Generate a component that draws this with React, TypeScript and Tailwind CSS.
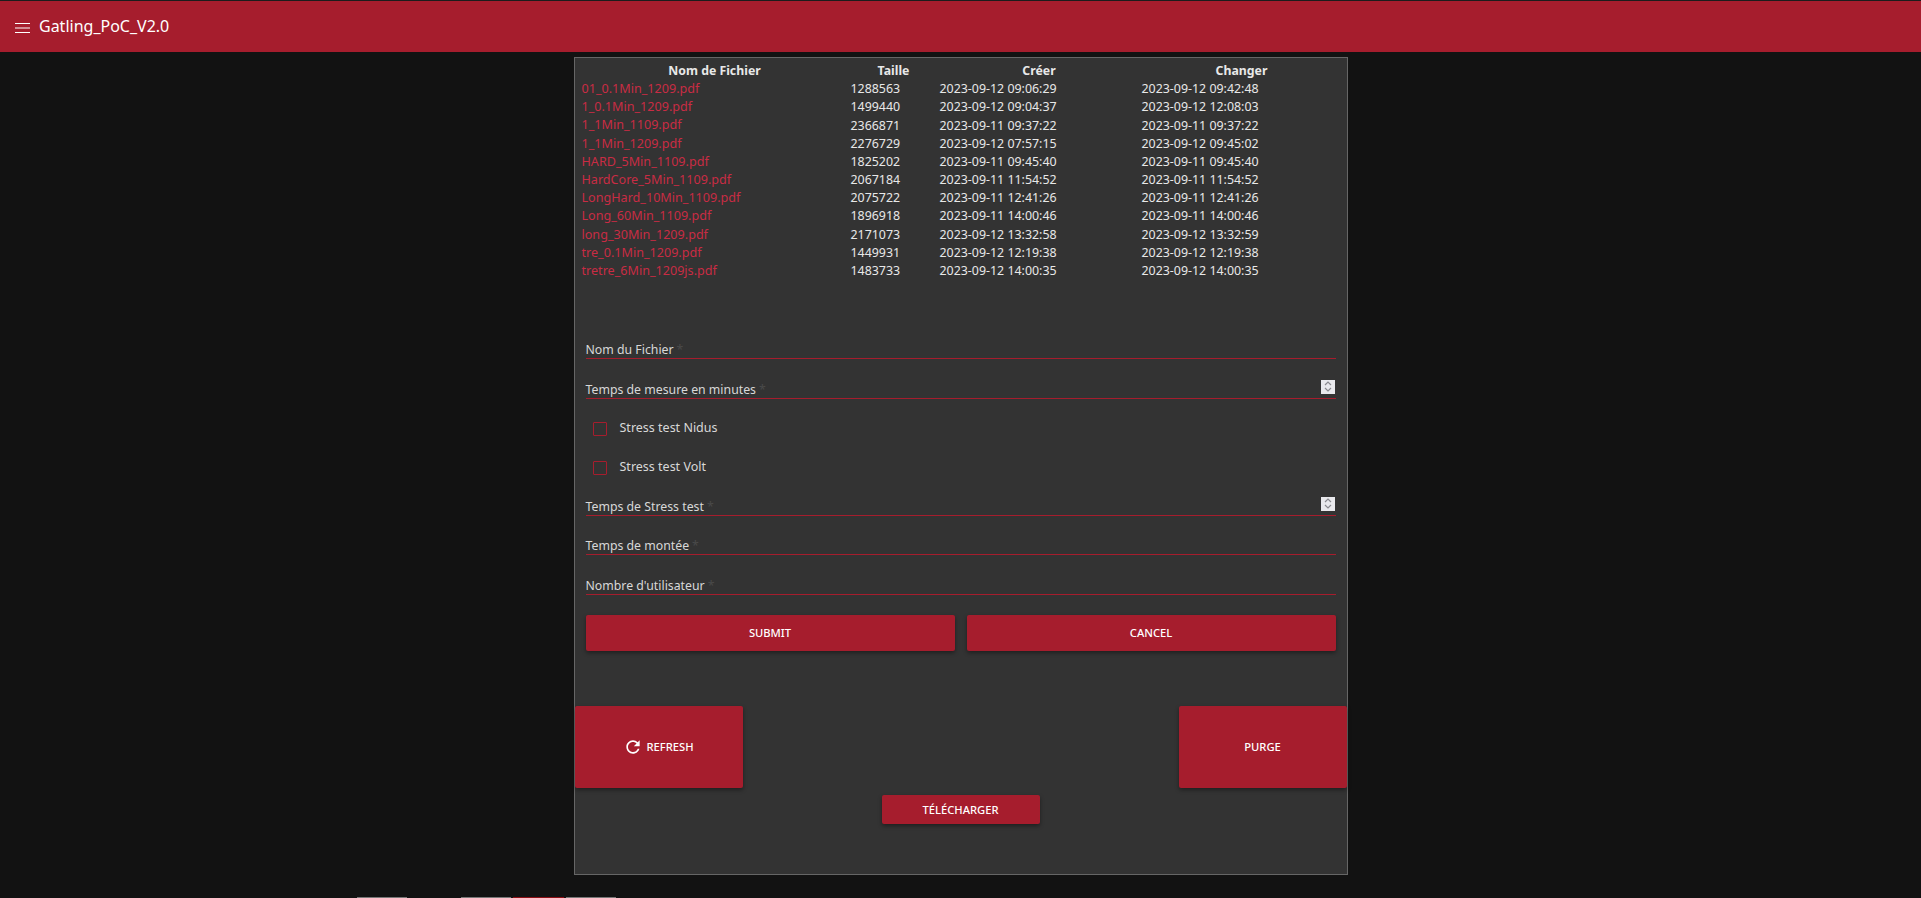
const FILES = [
  ["01_0.1Min_1209.pdf", "1288563", "2023-09-12 09:06:29", "2023-09-12 09:42:48"],
  ["1_0.1Min_1209.pdf", "1499440", "2023-09-12 09:04:37", "2023-09-12 12:08:03"],
  ["1_1Min_1109.pdf", "2366871", "2023-09-11 09:37:22", "2023-09-11 09:37:22"],
  ["1_1Min_1209.pdf", "2276729", "2023-09-12 07:57:15", "2023-09-12 09:45:02"],
  ["HARD_5Min_1109.pdf", "1825202", "2023-09-11 09:45:40", "2023-09-11 09:45:40"],
  ["HardCore_5Min_1109.pdf", "2067184", "2023-09-11 11:54:52", "2023-09-11 11:54:52"],
  ["LongHard_10Min_1109.pdf", "2075722", "2023-09-11 12:41:26", "2023-09-11 12:41:26"],
  ["Long_60Min_1109.pdf", "1896918", "2023-09-11 14:00:46", "2023-09-11 14:00:46"],
  ["long_30Min_1209.pdf", "2171073", "2023-09-12 13:32:58", "2023-09-12 13:32:59"],
  ["tre_0.1Min_1209.pdf", "1449931", "2023-09-12 12:19:38", "2023-09-12 12:19:38"],
  ["tretre_6Min_1209js.pdf", "1483733", "2023-09-12 14:00:35", "2023-09-12 14:00:35"],
];

const ROW = "grid grid-cols-[264px_84px_197px_198px] gap-x-[5px]";
const BTN =
  "flex items-center justify-center rounded-[2px] bg-[#a61d2d] pt-[2px] text-[11.2px] font-medium uppercase text-white shadow-[0_2px_4px_rgba(0,0,0,0.4)]";

function Field({ label, spinner, className }: { label: string; spinner?: boolean; className: string }) {
  return (
    <div className={`flex items-end justify-between border-b border-[#a61d2d] ${className}`}>
      <span className="text-[12.3px] leading-[17px] text-[#d8d8d8]">
        {label}
        <span className="ml-[3px] text-[#4a4a4a]">*</span>
      </span>
      {spinner && (
        <span className="mb-[4px] mr-[1px] flex h-[14px] w-[14px] items-center justify-center bg-[#e9e9ed]">
          <svg width="8" height="11" viewBox="0 0 8 11" fill="none" stroke="#8a8a90" strokeWidth="1.2">
            <path d="M1 4 L4 1 L7 4" />
            <path d="M1 7 L4 10 L7 7" />
          </svg>
        </span>
      )}
    </div>
  );
}

function Check({ label }: { label: string }) {
  return (
    <label className="flex h-[39px] items-center pl-[7px]">
      <span className="h-[14px] w-[14px] rounded-[1px] border border-[#a61d2d]" />
      <span className="mb-[2px] ml-[13px] text-[12.5px] text-[#d8d8d8]">{label}</span>
    </label>
  );
}

export default function App() {
  return (
    <div className="flex h-[898px] flex-col overflow-hidden bg-[#121212] font-['Noto_Sans',sans-serif]">
      {/* App bar */}
      <header className="flex h-[52px] shrink-0 items-center border-t border-[#1c1c1c] bg-[#a61d2d] pl-[15px] text-white">
        <svg className="mt-[2px]" width="15" height="10" viewBox="0 0 15 10" stroke="white" strokeWidth="1">
          <path d="M0 .5H15M0 5H15M0 9.5H15" />
        </svg>
        <span className="mb-[2px] ml-[9px] text-[16px]">Gatling_PoC_V2.0</span>
      </header>

      {/* Main panel */}
      <main className="mx-auto mt-[5px] flex h-[818px] w-[774px] flex-col border border-[#666] bg-[#333]">
        <div className="pl-[7px] pt-[4px] text-[12.4px] text-[#e8e8e8]">
          <div className={`${ROW} h-[18px] items-center pl-[1px] text-center text-[12.3px] font-bold`}>
            <span>Nom de Fichier</span>
            <span>Taille</span>
            <span>Créer</span>
            <span>Changer</span>
          </div>
          {FILES.map((file) => (
            <div key={file[0]} className={`${ROW} h-[18.2px] items-center`}>
              <a className="text-[12.6px] text-[#c92c44]">{file[0]}</a>
              <span>{file[1]}</span>
              <span>{file[2]}</span>
              <span>{file[3]}</span>
            </div>
          ))}
        </div>

        <form className="mx-[11px] mt-[56.8px] flex flex-col">
          <Field label="Nom du Fichier" className="h-[22px]" />
          <Field label="Temps de mesure en minutes" spinner className="mt-[18px] h-[22px]" />
          <div className="mt-[11px]">
            <Check label="Stress test Nidus" />
            <Check label="Stress test Volt" />
          </div>
          <Field label="Temps de Stress test" spinner className="mt-[6px] h-[22px]" />
          <Field label="Temps de montée" className="mt-[17px] h-[22px]" />
          <Field label="Nombre d'utilisateur" className="mt-[18px] h-[22px]" />
          <div className="mt-[20px] flex gap-[12px]">
            <button type="button" className={`${BTN} h-[36px] flex-1`}>Submit</button>
            <button type="button" className={`${BTN} h-[36px] flex-1`}>Cancel</button>
          </div>
        </form>

        <div className="mt-[55px] flex justify-between">
          <button type="button" className={`${BTN} h-[82px] w-[168px] gap-[3px]`}>
            <svg className="mb-[2px]" width="20" height="20" viewBox="0 0 24 24" fill="white">
              <path d="M17.65 6.35C16.2 4.9 14.21 4 12 4c-4.42 0-7.99 3.58-7.99 8s3.57 8 7.99 8c3.73 0 6.84-2.55 7.73-6h-2.08c-.82 2.33-3.04 4-5.65 4-3.31 0-6-2.69-6-6s2.69-6 6-6c1.66 0 3.14.69 4.22 1.78L13 11h7V4l-2.35 2.35z" />
            </svg>
            Refresh
          </button>
          <button type="button" className={`${BTN} h-[82px] w-[168px]`}>Purge</button>
        </div>
        <button type="button" className={`${BTN} mx-auto mt-[7px] h-[29px] w-[158px]`}>Télécharger</button>
      </main>

      {/* Cut-off row at the bottom edge */}
      <div className="mt-auto flex h-px gap-[2px] pl-[357px]">
        <span className="w-[50px] bg-[#777]" />
        <span className="ml-[52px] w-[50px] bg-[#777]" />
        <span className="w-[51px] bg-[#8b0f14]" />
        <span className="w-[50px] bg-[#777]" />
      </div>
    </div>
  );
}
